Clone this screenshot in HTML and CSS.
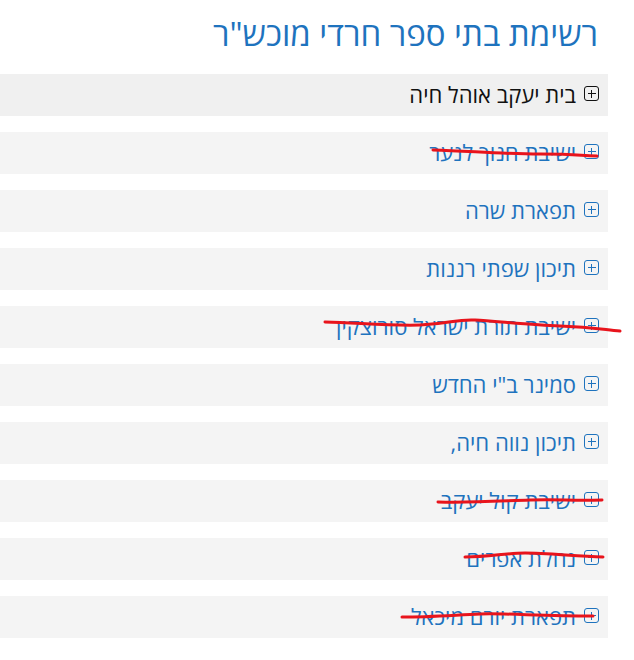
FILE: index.html
```html
<!DOCTYPE html>
<html lang="he" dir="rtl">
<head>
<meta charset="utf-8">
<title>רשימת בתי ספר</title>
<link rel="stylesheet" href="styles.css">
</head>
<body>
<div class="page">
  <h2 class="title">רשימת בתי ספר חרדי מוכש"ר</h2>
  <ul class="list">
    <li class="item active"><span class="icon"></span><span class="name">בית יעקב אוהל חיה</span></li>
    <li class="item"><span class="icon"></span><span class="name">ישיבת חנוך לנער</span></li>
    <li class="item"><span class="icon"></span><span class="name">תפארת שרה</span></li>
    <li class="item"><span class="icon"></span><span class="name">תיכון שפתי רננות</span></li>
    <li class="item"><span class="icon"></span><span class="name">ישיבת תורת ישראל סורוצקין</span></li>
    <li class="item"><span class="icon"></span><span class="name">סמינר ב"י החדש</span></li>
    <li class="item"><span class="icon"></span><span class="name">תיכון נווה חיה,</span></li>
    <li class="item"><span class="icon"></span><span class="name">ישיבת קול יעקב</span></li>
    <li class="item"><span class="icon"></span><span class="name">נחלת אפרים</span></li>
    <li class="item"><span class="icon"></span><span class="name">תפארת יורם מיכאל</span></li>
  </ul>
  <svg class="strikes" width="634" height="660" viewBox="0 0 634 660" aria-hidden="true">
    <path d="M433 150 C 470 151, 500 154, 540 154 S 580 156, 597 156"/>
    <path d="M325 322 C 360 323, 390 326, 420 325 S 455 319, 475 320 S 530 325, 560 326 S 600 329, 620 331"/>
    <path d="M438 502 C 470 503, 500 501, 530 500 S 570 501, 602 500"/>
    <path d="M465 557 C 490 557, 505 553, 525 553 S 575 556, 603 557"/>
    <path d="M402 617 C 430 617, 455 615, 480 614 S 540 616, 593 616"/>
  </svg>
</div>
</body>
</html>
```
FILE: styles.css
```css
html, body {
  margin: 0;
  padding: 0;
  background: #ffffff;
}
.page {
  position: relative;
  width: 608px;
  margin: 0 auto 0 0;
  font-family: "Open Sans", "DejaVu Sans", sans-serif;
}
.title {
  margin: 0;
  padding: 14px 10px 0 0;
  height: 60px;
  box-sizing: border-box;
  font-size: 33px;
  font-weight: 400;
  line-height: 40px;
  color: #1e73be;
}
.list {
  list-style: none;
  margin: 14px 0 0;
  padding: 0;
  display: flex;
  flex-direction: column;
  gap: 16px;
}
.item {
  height: 42px;
  box-sizing: border-box;
  display: flex;
  align-items: center;
  gap: 8px;
  padding: 0 9px 3px 0;
  background: #f4f4f4;
  color: #1e73be;
  font-size: 22px;
}
.item.active {
  background: #f0f0f0;
  color: #111111;
}
.icon {
  width: 13px;
  height: 13px;
  border: 1.5px solid currentColor;
  border-radius: 3px;
  position: relative;
  flex: none;
}
.icon::before,
.icon::after {
  content: "";
  position: absolute;
  background: currentColor;
}
.icon::before {
  left: 2.5px;
  right: 2.5px;
  top: 5.75px;
  height: 1.5px;
}
.icon::after {
  top: 2.5px;
  bottom: 2.5px;
  left: 5.75px;
  width: 1.5px;
}
.name {
  line-height: 1;
}
.strikes {
  position: absolute;
  top: 0;
  left: 0;
  pointer-events: none;
  overflow: visible;
}
.strikes path {
  fill: none;
  stroke: #e8141c;
  stroke-width: 3;
  stroke-linecap: round;
}
```
